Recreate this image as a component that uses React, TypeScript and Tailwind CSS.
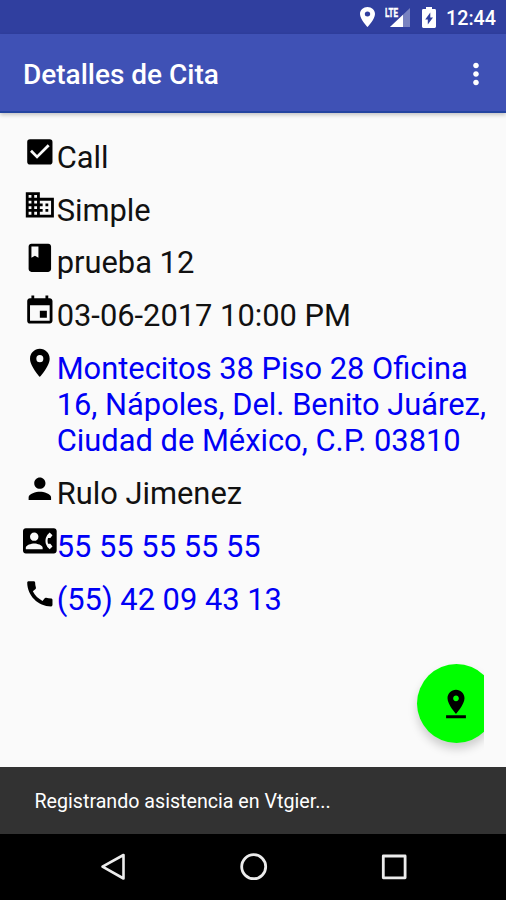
import type { ReactNode } from 'react'
import {
  MdBook,
  MdCall,
  MdCheckBox,
  MdContactPhone,
  MdDomain,
  MdEvent,
  MdMoreVert,
  MdPerson,
  MdPinDrop,
  MdPlace,
} from 'react-icons/md'

const details = [
  { icon: MdCheckBox, text: 'Call' },
  { icon: MdDomain, text: 'Simple' },
  { icon: MdBook, text: 'prueba 12' },
  { icon: MdEvent, text: '03-06-2017 10:00 PM' },
  { icon: MdPlace, text: 'Montecitos 38 Piso 28 Oficina 16, Nápoles, Del. Benito Juárez, Ciudad de México, C.P. 03810', link: true },
  { icon: MdPerson, text: 'Rulo Jimenez' },
  { icon: MdContactPhone, text: '55 55 55 55 55', link: true },
  { icon: MdCall, text: '(55) 42 09 43 13', link: true },
]

function StatusBar() {
  return (
    <div className="flex h-[34px] shrink-0 items-center justify-end bg-[#303f9f] pr-[10px]">
      <svg width="15" height="20" viewBox="5 2 14 20" preserveAspectRatio="none" fill="currentColor">
        <path d="M12 2C8.13 2 5 5.13 5 9c0 5.25 7 13 7 13s7-7.75 7-13c0-3.87-3.13-7-7-7zm0 9.5a2.5 2.5 0 1 1 0-5 2.5 2.5 0 0 1 0 5z" />
      </svg>
      <svg className="ml-[10px]" width="26" height="22" viewBox="0 0 26 22">
        <path d="M25 2v19H5z" fill="#fff" opacity=".35" />
        <path d="M18 8.700V21H5z" fill="#fff" />
        <rect x="0" y="0" width="14" height="11" fill="#303f9f" />
        <text x="0" y="10.500" fill="#fff" stroke="#fff" strokeWidth=".4" fontFamily="Roboto, sans-serif" fontSize="12.500" fontWeight="700" textLength="13" lengthAdjust="spacingAndGlyphs">LTE</text>
      </svg>
      <svg className="ml-[11px]" width="14" height="21" viewBox="0 0 14 21">
        <path d="M4 0h6v2h2.600q1.400 0 1.400 1.400v16.200q0 1.400-1.400 1.400H1.400Q0 21 0 19.600V3.400Q0 2 1.400 2H4z" fill="#fff" />
        <path d="M8.300 5.500v5H11L5.800 17.500v-5H3.200z" fill="#303f9f" />
      </svg>
      <span className="ml-[10px] pt-[3px] text-[19.700px] leading-none font-medium">12:44</span>
    </div>
  )
}

function AppBar() {
  return (
    <header className="relative z-10 flex h-[79px] shrink-0 items-center justify-between border-b-2 border-[#2444a0] bg-[#3f51b5] pr-[13px] pl-[23px] shadow-[0_2px_4px_rgba(0,0,0,0.22)]">
      <h1 className="pt-[5px] text-[28px] leading-none font-medium">Detalles de Cita</h1>
      <MdMoreVert className="mt-[2px] size-[34px]" />
    </header>
  )
}

function DetailRow({ icon, link, children }: { icon: ReactNode; link?: boolean; children: ReactNode }) {
  return (
    <li className="flex items-start">
      <span className="-mt-[4.500px] shrink-0">{icon}</span>
      <span className={link ? 'text-[#0000f5]' : 'text-[#111]'}>{children}</span>
    </li>
  )
}

export default function App() {
  return (
    <div className="flex h-[900px] w-[506px] flex-col overflow-hidden bg-[#fafafa] font-['Roboto',sans-serif] text-white">
      <StatusBar />
      <AppBar />
      <main className="relative flex-1 pt-[26.800px] pr-[16px] pl-[23px]">
        <ul className="flex flex-col gap-[16.600px] text-[30.850px] leading-[36.200px]">
          {details.map(({ icon: Icon, text, link }) => (
            <DetailRow key={text} link={link} icon={<Icon className="size-[33.700px] text-black" />}>
              {text}
            </DetailRow>
          ))}
        </ul>
        <div className="absolute right-[22px] bottom-0 h-[120px] w-[84px] overflow-hidden">
          <button
            type="button"
            aria-label="Registrar asistencia"
            className="mt-[17px] ml-[17px] flex size-[79px] items-center justify-center rounded-full bg-[#00ff00] pr-px text-black shadow-[0_6px_10px_rgba(0,0,0,0.18)]"
          >
            <MdPinDrop className="size-[34px]" />
          </button>
        </div>
      </main>
      <div className="flex h-[67px] shrink-0 items-center bg-[#323232] pt-[2px] pl-[34.500px] text-[19.650px]">
        Registrando asistencia en Vtgier...
      </div>
      <nav className="flex h-[66px] shrink-0 items-center justify-center gap-[112px] bg-black pl-[2px]">
        <svg width="28" height="28" viewBox="0 0 28 28" fill="none" stroke="#ececec" strokeWidth="2.600" strokeLinejoin="round">
          <path d="M23.500 2v23.500L2.500 13.700z" />
        </svg>
        <svg width="28" height="28" viewBox="0 0 28 28" fill="none" stroke="#ececec" strokeWidth="2.800">
          <circle cx="13.700" cy="13.700" r="12" />
        </svg>
        <svg width="28" height="28" viewBox="0 0 28 28" fill="none" stroke="#ececec" strokeWidth="2.800" strokeLinejoin="round">
          <path d="M3.300 3h21.800v21.800H3.300z" />
        </svg>
      </nav>
    </div>
  )
}
